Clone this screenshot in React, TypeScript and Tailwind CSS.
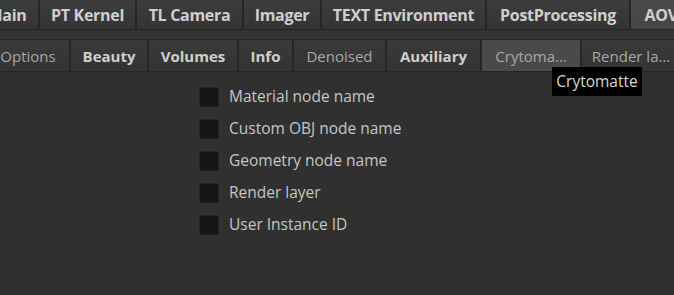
import React from "react";

const topTabs = [
  { label: "Main", w: 64, active: false },
  { label: "PT Kernel", w: 97, active: false },
  { label: "TL Camera", w: 107, active: false },
  { label: "Imager", w: 78, active: false },
  { label: "TEXT Environment", w: 165, active: false },
  { label: "PostProcessing", w: 144, active: false },
  { label: "AOVs", w: 70, active: true },
];

const subTabs = [
  { label: "Options", w: 84, bold: false, active: false },
  { label: "Beauty", w: 78, bold: true, active: false },
  { label: "Volumes", w: 90, bold: true, active: false },
  { label: "Info", w: 55, bold: true, active: false },
  { label: "Denoised", w: 93, bold: false, active: false },
  { label: "Auxiliary", w: 95, bold: true, active: false },
  { label: "Crytoma\u2026", w: 100, bold: false, active: true },
  { label: "Render la\u2026", w: 100, bold: false, active: false },
];

const options = [
  "Material node name",
  "Custom OBJ node name",
  "Geometry node name",
  "Render layer",
  "User Instance ID",
];

export default function App() {
  return (
    <div
      className="relative w-[674px] h-[295px] overflow-hidden bg-[#303030] text-[#cfcfcf]"
      style={{ fontFamily: '"Open Sans", "Noto Sans", sans-serif' }}
    >
      {/* top tab row */}
      <div className="flex h-[30px] -ml-[24px] border-b border-[#252525]">
        {topTabs.map((t) => (
          <div
            key={t.label}
            style={{ width: t.w }}
            className={
              "shrink-0 flex items-center justify-center border-r-2 border-[#262626] text-[16px] font-bold tracking-[-0.3px] " +
              (t.active
                ? "bg-gradient-to-b from-[#4c4c4c] to-[#444]"
                : "bg-gradient-to-b from-[#3d3d3d] to-[#343434]")
            }
          >
            {t.label}
          </div>
        ))}
      </div>

      {/* strip between rows */}
      <div className="h-[10px] bg-[#333] border-b border-[#262626]" />

      {/* sub tab row */}
      <div className="flex h-[32px] -ml-[13px] border-b border-[#262626]">
        {subTabs.map((t) => (
          <div
            key={t.label}
            style={{ width: t.w }}
            className={
              "shrink-0 flex items-center justify-center pt-[2px] border-r-2 border-[#262626] text-[15px] " +
              (t.bold ? "font-bold text-[#cfcfcf] " : "text-[#a8a8a8] ") +
              (t.active
                ? "bg-[#4a4a4a]"
                : "bg-gradient-to-b from-[#3a3a3a] to-[#333]")
            }
          >
            {t.label}
          </div>
        ))}
      </div>

      {/* checkbox list */}
      <div className="flex flex-col gap-[12px] pl-[199px] pt-[15px]">
        {options.map((o) => (
          <div key={o} className="flex items-center gap-[10px] h-[20px]">
            <div className="w-[20px] h-[20px] bg-[#151515] border border-[#242424]" />
            <span className="text-[15.5px] text-[#c6c6c6]">{o}</span>
          </div>
        ))}
      </div>

      {/* tooltip */}
      <div className="absolute left-[552px] top-[67px] w-[90px] h-[29px] bg-black flex items-center justify-center text-[15.5px] text-[#d8d8d8]">
        Crytomatte
      </div>
    </div>
  );
}
